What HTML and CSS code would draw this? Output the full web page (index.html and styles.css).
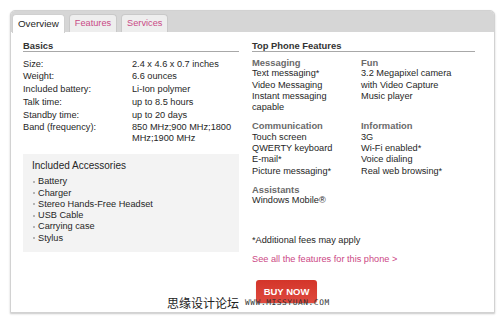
FILE: index.html
```html
<!DOCTYPE html>
<html lang="en">
<head>
    <meta charset="UTF-8">
    <title>Phone Overview</title>
    <link rel="stylesheet" href="styles.css">
</head>
<body>
    <div class="panel">
        <nav class="tabbar">
            <a class="tab active">Overview</a>
            <a class="tab">Features</a>
            <a class="tab">Services</a>
        </nav>

        <div class="panel-body">
            <section class="basics">
                <h2>Basics</h2>
                <dl class="specs">
                    <dt>Size:</dt><dd>2.4 x 4.6 x 0.7 inches</dd>
                    <dt>Weight:</dt><dd>6.6 ounces</dd>
                    <dt>Included battery:</dt><dd>Li-Ion polymer</dd>
                    <dt>Talk time:</dt><dd>up to 8.5 hours</dd>
                    <dt>Standby time:</dt><dd>up to 20 days</dd>
                    <dt>Band (frequency):</dt><dd>850 MHz;900 MHz;1800 MHz;1900 MHz</dd>
                </dl>

                <div class="accessories">
                    <h3>Included Accessories</h3>
                    <ul>
                        <li>Battery</li>
                        <li>Charger</li>
                        <li>Stereo Hands-Free Headset</li>
                        <li>USB Cable</li>
                        <li>Carrying case</li>
                        <li>Stylus</li>
                    </ul>
                </div>
            </section>

            <section class="features">
                <h2>Top Phone Features</h2>
                <div class="feature-grid">
                    <div class="group">
                        <h4>Messaging</h4>
                        <p>Text messaging*</p>
                        <p>Video Messaging</p>
                        <p>Instant messaging capable</p>
                    </div>
                    <div class="group">
                        <h4>Fun</h4>
                        <p>3.2 Megapixel camera</p>
                        <p>with Video Capture</p>
                        <p>Music player</p>
                    </div>
                    <div class="group">
                        <h4>Communication</h4>
                        <p>Touch screen</p>
                        <p>QWERTY keyboard</p>
                        <p>E-mail*</p>
                        <p>Picture messaging*</p>
                    </div>
                    <div class="group">
                        <h4>Information</h4>
                        <p>3G</p>
                        <p>Wi-Fi enabled*</p>
                        <p>Voice dialing</p>
                        <p>Real web browsing*</p>
                    </div>
                    <div class="group">
                        <h4>Assistants</h4>
                        <p>Windows Mobile&reg;</p>
                    </div>
                </div>

                <p class="note">*Additional fees may apply</p>
                <a class="more">See all the features for this phone &gt;</a>
                <button class="buy">BUY NOW</button>
            </section>
        </div>
    </div>

    <div class="watermark">
        <span class="wm-cn">思缘设计论坛</span>
        <span class="wm-url">WWW.MISSYUAN.COM</span>
    </div>
</body>
</html>
```

FILE: styles.css
```css
* {
    margin: 0;
    padding: 0;
    box-sizing: border-box;
}

body {
    background: #ffffff;
    color: #262626;
    font-family: 'Liberation Sans', Arial, sans-serif;
    font-size: 9.2px;
    line-height: 11.3px;
    width: 500px;
    height: 320px;
    overflow: hidden;
    position: relative;
}

.panel {
    margin: 10px 0 0 10px;
    width: 485px;
    height: 303px;
    border: 1px solid #d2d2d2;
    border-radius: 5px 5px 0 0;
    background: #ffffff;
    box-shadow: 0 1px 2px rgba(0,0,0,0.22);
    display: flex;
    flex-direction: column;
    overflow: hidden;
}

.tabbar {
    height: 21px;
    flex: none;
    background: #d6d6d6;
    display: flex;
    align-items: flex-end;
    gap: 4px;
    padding-left: 1px;
}

.tab {
    height: 18px;
    padding: 0 5px;
    display: flex;
    align-items: center;
    font-size: 9.2px;
    color: #c94a86;
    background: #eeeeee;
    border: 1px solid #c9c9c9;
    border-bottom: none;
    border-radius: 4px 4px 0 0;
}

.tab.active {
    color: #262626;
    background: #ffffff;
    border-color: #d0d0d0;
    height: 19px;
    margin-bottom: -1px;
    font-size: 9.8px;
}

.panel-body {
    flex: 1;
    display: grid;
    grid-template-columns: 216px 223px;
    column-gap: 13px;
    padding: 8px 0 0 12px;
}

h2 {
    font-size: 9.4px;
    line-height: 11px;
    font-weight: bold;
    color: #333333;
    border-bottom: 1px solid #a8a8a8;
}

.specs {
    display: grid;
    grid-template-columns: 109px 1fr;
    row-gap: 1.8px;
    margin-top: 6.5px;
    line-height: 11px;
}

.specs dd {
    padding-right: 4px;
}

.accessories {
    margin-top: 9.5px;
    background: #f3f3f3;
    padding: 6.5px 9px 8px 9px;
}

.accessories h3 {
    font-size: 10px;
    line-height: 12px;
    font-weight: normal;
    color: #262626;
}

.accessories ul {
    list-style: none;
    margin-top: 4px;
    line-height: 11.2px;
}

.accessories li {
    display: flex;
    align-items: center;
    gap: 3px;
    padding-left: 1px;
}

.accessories li::before {
    content: "";
    width: 2px;
    height: 2px;
    background: #b5b5b5;
}

.features {
    display: flex;
    flex-direction: column;
    align-items: flex-start;
}

.features h2 {
    align-self: stretch;
}

.feature-grid {
    display: grid;
    grid-template-columns: 109px 1fr;
    row-gap: 7px;
    margin-top: 5px;
    align-self: stretch;
}

.group {
    padding-right: 4px;
}

.group h4 {
    font-size: 9.4px;
    font-weight: bold;
    color: #6a6a6a;
}

.note {
    margin-top: 28px;
}

.more {
    margin-top: 8.5px;
    color: #cc4785;
}

.buy {
    margin: 14px 0 0 4px;
    width: 61px;
    height: 23px;
    border: none;
    border-radius: 3px;
    background: linear-gradient(#d3352a, #df4a3f);
    color: #ffffff;
    font-family: 'Liberation Sans', Arial, sans-serif;
    font-size: 9.5px;
    font-weight: bold;
    box-shadow: 0 1px 1px rgba(0,0,0,0.2);
}

.watermark {
    position: absolute;
    left: 167px;
    top: 295px;
    display: flex;
    align-items: center;
    gap: 6px;
    color: #222222;
}

.wm-cn {
    font-family: 'Noto Sans CJK SC', sans-serif;
    font-size: 12px;
    line-height: 16px;
}

.wm-url {
    font-family: 'DejaVu Sans Mono', monospace;
    font-size: 7.8px;
    letter-spacing: 0.6px;
    color: #333333;
}
```
